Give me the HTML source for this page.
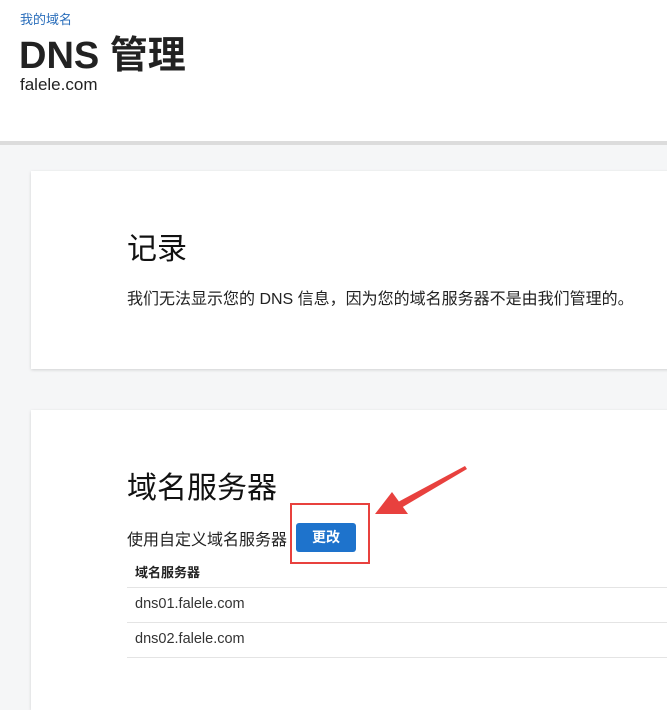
<!DOCTYPE html>
<html><head><meta charset="utf-8"><style>
*{margin:0;padding:0;box-sizing:border-box}
body{width:667px;height:680px;overflow:hidden;background:#f5f6f7;font-family:"Liberation Sans","Noto Sans CJK SC",sans-serif;color:#222;position:relative}
.hdr{position:absolute;left:0;top:0;width:667px;height:141px;background:#fff}
.bar{position:absolute;left:0;top:141px;width:667px;height:4px;background:#dcdcdc}
.crumb{position:absolute;left:20px;top:9px;font-size:13px;color:#2a6ebb}
.h1{position:absolute;left:19px;top:34px;font-size:38px;font-weight:bold;color:#222;line-height:44px}
.dom{position:absolute;left:20px;top:75px;font-size:17px;color:#222}
.card{position:absolute;left:31px;width:660px;background:#fff;box-shadow:0 1px 3px rgba(0,0,0,.15)}
.t{position:absolute;font-size:30px;font-weight:normal;color:#111}
.p{position:absolute;font-size:16px;color:#222}
.btn{position:absolute;left:296px;top:523px;width:60px;height:29px;background:#1e73cc;border-radius:3px;color:#fff;font-size:14px;font-weight:bold;text-align:center;line-height:29px}
.rbox{position:absolute;left:290px;top:503px;width:80px;height:61px;border:2px solid #e8413e}
.th{position:absolute;left:135px;top:562px;font-size:13px;font-weight:bold;color:#222}
.line{position:absolute;left:127px;width:540px;height:1px;background:#e4e4e4}
.td{position:absolute;left:135px;font-size:14.5px;color:#333}
</style></head><body>
<div class="hdr"></div><div class="bar"></div>
<div class="crumb">我的域名</div>
<div class="h1">DNS 管理</div>
<div class="dom">falele.com</div>
<div class="card" style="top:171px;height:198px"></div>
<div class="t" style="left:127px;top:224px">记录</div>
<div class="p" style="left:127px;top:285px">我们无法显示您的 DNS 信息，因为您的域名服务器不是由我们管理的。</div>
<div class="card" style="top:410px;height:300px"></div>
<div class="t" style="left:127px;top:463px">域名服务器</div>
<div class="p" style="left:127px;top:526px">使用自定义域名服务器</div>
<div class="btn">更改</div>
<div class="rbox"></div>
<div class="th">域名服务器</div>
<div class="line" style="top:587px"></div>
<div class="td" style="top:596px">dns01.falele.com</div>
<div class="line" style="top:622px"></div>
<div class="td" style="top:631px">dns02.falele.com</div>
<div class="line" style="top:657px"></div>
<svg style="position:absolute;left:0;top:0" width="667" height="680">
<polygon points="465,466 398,502 401,508 467,469" fill="#e8413e"/>
<polygon points="375,514 392,492 408,514" fill="#e8413e"/>
</svg>
</body></html>
